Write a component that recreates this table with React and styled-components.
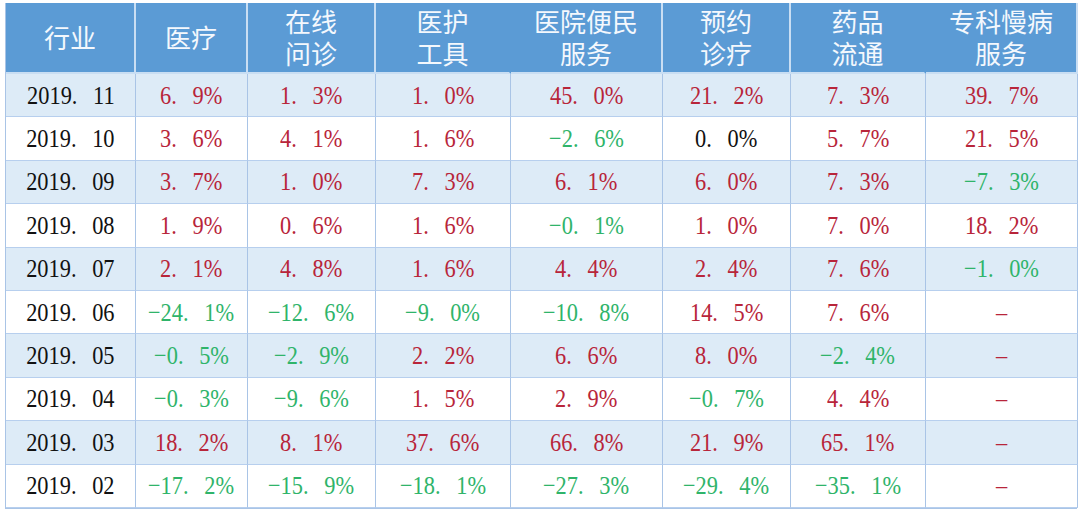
import React from "react";
import styled, { createGlobalStyle } from "styled-components";

const Global = createGlobalStyle`
  html, body { margin: 0; padding: 0; background: #ffffff; }
  body { width: 1080px; height: 513px; overflow: hidden; }
`;

const COLS = [130, 112, 128, 135, 152, 128, 135, 152];

const Page = styled.div`
  padding: 3px 0 0 5px;
`;

const Table = styled.div`
  display: grid;
  grid-template-columns: ${COLS.map((c) => c + "px").join(" ")};
  grid-template-rows: 71px repeat(10, 43.4px);
  width: 1072px;
  border-left: 1px solid #a9c4e6;
  border-bottom: 1px solid #a9c4e6;
  box-sizing: border-box;
`;

const HeadCell = styled.div`
  background: #5b9bd5;
  color: #f4f8fd;
  display: flex;
  align-items: center;
  justify-content: center;
  text-align: center;
  font-family: "Noto Sans CJK SC", "Noto Sans", sans-serif;
  font-size: 26px;
  line-height: 32px;
  box-sizing: border-box;
  border-right: 2px solid ${(p) => (p.$noLine ? "#5b9bd5" : "#c9def3")};
  border-bottom: 2px solid #c9def3;
  white-space: pre-line;
  padding-bottom: 2px;
`;

const Cell = styled.div`
  background: ${(p) => (p.$shade ? "#ddebf7" : "#ffffff")};
  color: ${(p) => p.$color};
  display: flex;
  align-items: center;
  justify-content: center;
  font-family: "Liberation Serif", "Noto Sans CJK SC", serif;
  font-size: 26px;
  box-sizing: border-box;
  border-right: 1px solid #a9c4e6;
  border-bottom: 1px solid #b7cfee;
  padding-top: 1px;
`;

const DateCell = styled(Cell)`
  color: #111111;
`;

const Num = styled.span`
  display: inline-block;
  white-space: pre;
  transform: scaleX(0.86);
`;

const headers = [
  "行业",
  "医疗",
  "在线\n问诊",
  "医护\n工具",
  "医院便民\n服务",
  "预约\n诊疗",
  "药品\n流通",
  "专科慢病\n服务",
];
const noLine = [false, false, false, true, false, false, true, false];

const rows = [
  ["2019.11", [6.9, 1.3, 1.0, 45.0, 21.2, 7.3, 39.7]],
  ["2019.10", [3.6, 4.1, 1.6, -2.6, 0.0, 5.7, 21.5]],
  ["2019.09", [3.7, 1.0, 7.3, 6.1, 6.0, 7.3, -7.3]],
  ["2019.08", [1.9, 0.6, 1.6, -0.1, 1.0, 7.0, 18.2]],
  ["2019.07", [2.1, 4.8, 1.6, 4.4, 2.4, 7.6, -1.0]],
  ["2019.06", [-24.1, -12.6, -9.0, -10.8, 14.5, 7.6, null]],
  ["2019.05", [-0.5, -2.9, 2.2, 6.6, 8.0, -2.4, null]],
  ["2019.04", [-0.3, -9.6, 1.5, 2.9, -0.7, 4.4, null]],
  ["2019.03", [18.2, 8.1, 37.6, 66.8, 21.9, 65.1, null]],
  ["2019.02", [-17.2, -15.9, -18.1, -27.3, -29.4, -35.1, null]],
];

const RED = "#b8253a";
const GREEN = "#2fb46a";
const DOT = ".\u2002\u2009";

function fmt(v) {
  if (v === null) return "–";
  const s = Math.abs(v).toFixed(1).replace(".", DOT);
  return (v < 0 ? "−" : "") + s + "%";
}

function colorOf(v) {
  if (v === null) return RED;
  if (v > 0) return RED;
  if (v < 0) return GREEN;
  return "#111111";
}

export default function App() {
  return (
    <>
      <Global />
      <Page>
        <Table>
          {headers.map((h, i) => (
            <HeadCell key={h} $noLine={noLine[i]}>
              {h}
            </HeadCell>
          ))}
          {rows.map(([d, vals], r) => (
            <React.Fragment key={d}>
              <DateCell $shade={r % 2 === 0}>
                <Num>{d.replace(".", DOT)}</Num>
              </DateCell>
              {vals.map((v, c) => (
                <Cell key={c} $shade={r % 2 === 0} $color={colorOf(v)}>
                  <Num>{fmt(v)}</Num>
                </Cell>
              ))}
            </React.Fragment>
          ))}
        </Table>
      </Page>
    </>
  );
}
